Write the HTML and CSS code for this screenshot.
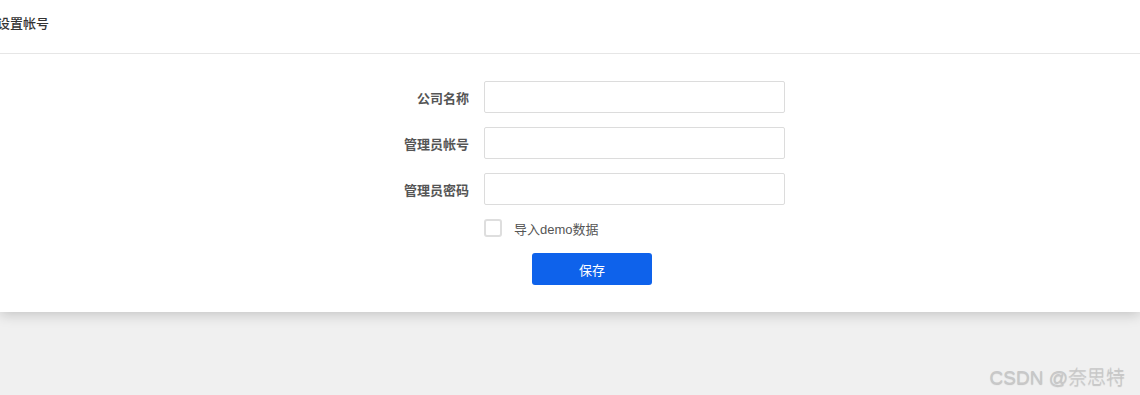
FILE: index.html
```html
<!DOCTYPE html>
<html lang="zh">
<head>
<meta charset="utf-8">
<link rel="stylesheet" href="styles.css">
</head>
<body>
<div class="card">
  <div class="card-header"><span class="title">设置帐号</span></div>
  <form class="form">
    <div class="row">
      <label class="label">公司名称</label>
      <input class="input" type="text">
    </div>
    <div class="row">
      <label class="label">管理员帐号</label>
      <input class="input" type="text">
    </div>
    <div class="row">
      <label class="label">管理员密码</label>
      <input class="input" type="password">
    </div>
    <div class="row check-row">
      <span class="checkbox"></span>
      <span class="check-text">导入demo数据</span>
    </div>
    <div class="row btn-row">
      <button class="btn" type="button">保存</button>
    </div>
  </form>
</div>
<div class="watermark">CSDN @奈思特</div>
</body>
</html>
```
FILE: styles.css
```css
html, body {
  margin: 0;
  padding: 0;
}
body {
  background: #f0f0f0;
  font-family: "Liberation Sans", "Noto Sans CJK SC", sans-serif;
  height: 395px;
  overflow: hidden;
  position: relative;
}
.card {
  background: #fff;
  box-shadow: 0 3px 12px rgba(0, 0, 0, 0.18);
  padding-bottom: 27px;
}
.card-header {
  border-bottom: 1px solid #e6e6e6;
  display: flex;
  align-items: center;
  box-sizing: border-box;
  height: 54px;
}
.title {
  margin-left: -3px;
  font-size: 13px;
  color: #333;
  font-weight: 500;
  margin-top: -8px;
}
.form {
  padding-top: 27px;
  padding-left: 369px;
  display: flex;
  flex-direction: column;
  gap: 14px;
}
.row {
  display: flex;
  align-items: center;
}
.label {
  width: 100px;
  text-align: right;
  padding-right: 15px;
  font-size: 13px;
  font-weight: bold;
  color: #555;
}
.input {
  width: 301px;
  height: 32px;
  box-sizing: border-box;
  border: 1px solid #dcdcdc;
  border-radius: 2px;
  margin: 0;
  padding: 0 8px;
}
.check-row {
  margin-left: 115px;
  height: 18px;
}
.checkbox {
  width: 18px;
  height: 18px;
  box-sizing: border-box;
  border: 2px solid #dedede;
  border-radius: 3px;
  background: #fff;
}
.check-text {
  margin-left: 12px;
  font-size: 13px;
  color: #555;
}
.btn-row {
  margin-left: 163px;
  margin-top: 2px;
}
.btn {
  width: 120px;
  height: 32px;
  background: #0e62eb;
  color: #fff;
  border: none;
  border-radius: 3px;
  font-size: 13px;
  font-family: inherit;
  padding: 0;
}
.watermark {
  position: absolute;
  right: 15px;
  bottom: 6px;
  font-size: 19px;
  font-weight: 300;
  color: #c8c8c8;
  text-shadow: 0 1px 1px rgba(0, 0, 0, 0.2);
}
```
